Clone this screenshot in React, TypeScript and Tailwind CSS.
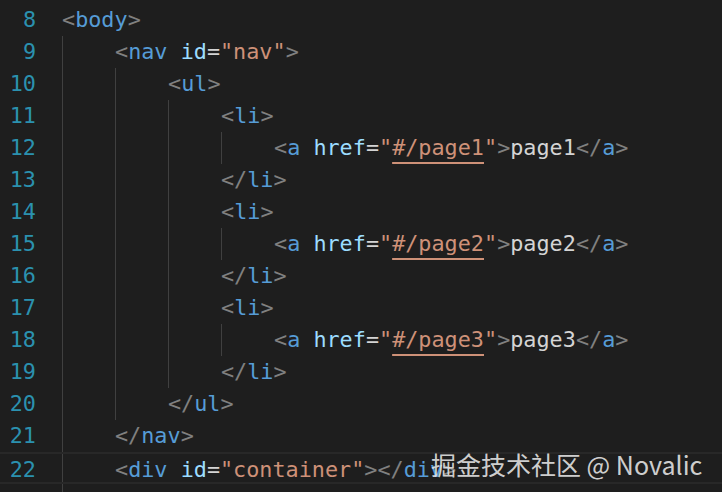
import React from "react";

type Tok = { t: string; c: string; u?: boolean };

const P = "text-[#808080]"; // punctuation
const T = "text-[#569cd6]"; // tag
const A = "text-[#9cdcfe]"; // attribute
const E = "text-[#d4d4d4]"; // equals/text
const S = "text-[#ce9178]"; // string

const lt = (): Tok => ({ t: "<", c: P });
const gt = (): Tok => ({ t: ">", c: P });

const open = (name: string): Tok[] => [lt(), { t: name, c: T }, gt()];
const close = (name: string): Tok[] => [{ t: "</", c: P }, { t: name, c: T }, gt()];
const link = (n: number): Tok[] => [
  lt(),
  { t: "a", c: T },
  { t: " ", c: E },
  { t: "href", c: A },
  { t: "=", c: E },
  { t: '"', c: S },
  { t: `#/page${n}`, c: S, u: true },
  { t: '"', c: S },
  gt(),
  { t: `page${n}`, c: E },
  { t: "</", c: P },
  { t: "a", c: T },
  gt(),
];

const lines: { n?: number; indent: number; toks: Tok[]; active?: boolean }[] = [
  { n: 8, indent: 0, toks: open("body") },
  {
    n: 9,
    indent: 1,
    toks: [lt(), { t: "nav", c: T }, { t: " ", c: E }, { t: "id", c: A }, { t: "=", c: E }, { t: '"nav"', c: S }, gt()],
  },
  { n: 10, indent: 2, toks: open("ul") },
  { n: 11, indent: 3, toks: open("li") },
  { n: 12, indent: 4, toks: link(1) },
  { n: 13, indent: 3, toks: close("li") },
  { n: 14, indent: 3, toks: open("li") },
  { n: 15, indent: 4, toks: link(2) },
  { n: 16, indent: 3, toks: close("li") },
  { n: 17, indent: 3, toks: open("li") },
  { n: 18, indent: 4, toks: link(3) },
  { n: 19, indent: 3, toks: close("li") },
  { n: 20, indent: 2, toks: close("ul") },
  { n: 21, indent: 1, toks: close("nav") },
  {
    n: 22,
    indent: 1,
    active: true,
    toks: [
      lt(),
      { t: "div", c: T },
      { t: " ", c: E },
      { t: "id", c: A },
      { t: "=", c: E },
      { t: '"container"', c: S },
      gt(),
      { t: "</", c: P },
      { t: "div", c: T },
      gt(),
    ],
  },
  { indent: 1, toks: [] },
];

export default function App() {
  return (
    <div
      className="relative w-[722px] h-[492px] overflow-hidden bg-[#1e1e1e] pt-[4px]"
      style={{ fontFamily: '"DejaVu Sans Mono", "Liberation Mono", monospace' }}
    >
      {lines.map((l, i) => (
        <div
          key={i}
          className={
            "flex h-[32px] items-stretch text-[21.8px] leading-[32px] " +
            (l.active ? "border-y-2 border-[#282828]" : "")
          }
        >
          <div className="w-[62px] shrink-0 pr-[26px] text-right text-[#2b91af]">{l.n ?? ""}</div>
          <div className="flex items-stretch whitespace-pre">
            {Array.from({ length: l.indent }).map((_, k) => (
              <span key={k} className="w-[53px] shrink-0 border-l border-[#404040]" />
            ))}
            {l.toks.map((tk, k) => (
              <span
                key={k}
                className={
                  tk.c +
                  (tk.u ? " underline decoration-[#ce9178] decoration-2 underline-offset-[7px]" : "")
                }
              >
                {tk.t}
              </span>
            ))}
          </div>
        </div>
      ))}
      <div
        className="absolute left-[431px] top-[446px] text-[25px] leading-[36px] text-[#e6e6e6]/90"
        style={{ fontFamily: '"Noto Sans CJK SC", "Noto Sans", sans-serif' }}
      >
        掘金技术社区 @ Novalic
      </div>
    </div>
  );
}
